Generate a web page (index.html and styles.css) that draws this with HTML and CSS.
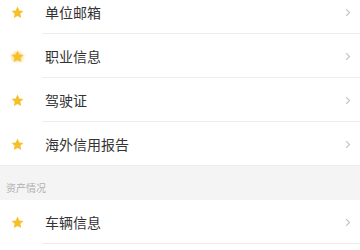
FILE: index.html
```html
<!DOCTYPE html>
<html lang="zh">
<head>
<meta charset="utf-8">
<link rel="stylesheet" href="styles.css">
</head>
<body>
<div class="list">
  <div class="row"><svg class="star" viewBox="0 0 24 24"><path d="M12 2.5l2.9 6.2 6.6.8-4.9 4.6 1.3 6.6L12 17.4l-5.9 3.3 1.3-6.6-4.9-4.6 6.6-.8z"/></svg><span class="label">单位邮箱</span><svg class="chev" viewBox="0 0 8 12"><path d="M1.5 1.5l4.5 4.5-4.5 4.5"/></svg></div>
  <div class="row"><svg class="star wide" viewBox="0 0 24 24"><path d="M12 2.5l2.9 6.2 6.6.8-4.9 4.6 1.3 6.6L12 17.4l-5.9 3.3 1.3-6.6-4.9-4.6 6.6-.8z"/></svg><span class="label">职业信息</span><svg class="chev" viewBox="0 0 8 12"><path d="M1.5 1.5l4.5 4.5-4.5 4.5"/></svg></div>
  <div class="row"><svg class="star" viewBox="0 0 24 24"><path d="M12 2.5l2.9 6.2 6.6.8-4.9 4.6 1.3 6.6L12 17.4l-5.9 3.3 1.3-6.6-4.9-4.6 6.6-.8z"/></svg><span class="label">驾驶证</span><svg class="chev" viewBox="0 0 8 12"><path d="M1.5 1.5l4.5 4.5-4.5 4.5"/></svg></div>
  <div class="row last"><svg class="star" viewBox="0 0 24 24"><path d="M12 2.5l2.9 6.2 6.6.8-4.9 4.6 1.3 6.6L12 17.4l-5.9 3.3 1.3-6.6-4.9-4.6 6.6-.8z"/></svg><span class="label">海外信用报告</span><svg class="chev" viewBox="0 0 8 12"><path d="M1.5 1.5l4.5 4.5-4.5 4.5"/></svg></div>
  <div class="section">资产情况</div>
  <div class="row"><svg class="star" viewBox="0 0 24 24"><path d="M12 2.5l2.9 6.2 6.6.8-4.9 4.6 1.3 6.6L12 17.4l-5.9 3.3 1.3-6.6-4.9-4.6 6.6-.8z"/></svg><span class="label">车辆信息</span><svg class="chev" viewBox="0 0 8 12"><path d="M1.5 1.5l4.5 4.5-4.5 4.5"/></svg></div>
</div>
</body>
</html>
```
FILE: styles.css
```css
html, body {
  margin: 0;
  padding: 0;
  background: #ffffff;
}
body {
  font-family: "Noto Sans CJK SC", "Noto Sans", sans-serif;
  overflow: hidden;
  width: 360px;
  height: 250px;
}
.list {
  margin-top: -10px;
}
.row {
  height: 44px;
  display: flex;
  align-items: center;
  position: relative;
  background: #ffffff;
}
.row::after {
  content: "";
  position: absolute;
  left: 42px;
  right: 0;
  bottom: 0;
  height: 1px;
  background: #ededed;
}
.row.last::after {
  left: 0;
}
.star {
  width: 15px;
  height: 15px;
  margin-left: 10px;
  margin-right: 20px;
  fill: #f6c02a;
  flex: none;
}
.star.wide {
  filter: drop-shadow(-2px 0 1px rgba(246, 196, 60, 0.5)) drop-shadow(2px 0 1px rgba(246, 196, 60, 0.5));
}
.label {
  flex: 1;
  font-size: 14px;
  color: #333333;
  line-height: 20px;
}
.chev {
  width: 6px;
  height: 9px;
  margin-right: 9px;
  fill: none;
  stroke: #c4c4c4;
  stroke-width: 1.6;
  flex: none;
}
.section {
  height: 34px;
  box-sizing: border-box;
  background: #f4f4f4;
  padding: 15px 0 0 6px;
  font-size: 10px;
  line-height: 14px;
  color: #b0b0b0;
}
```
